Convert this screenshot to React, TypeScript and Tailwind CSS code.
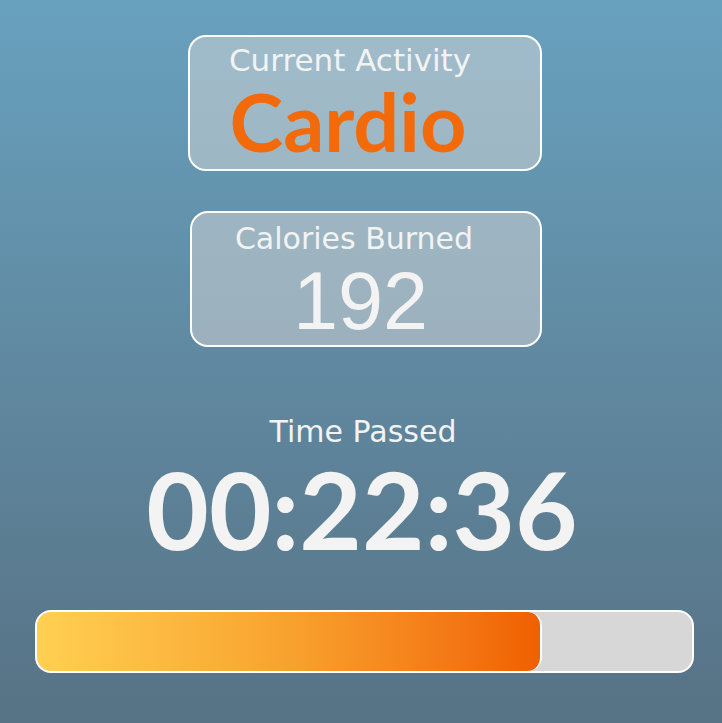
import React from 'react';

const workout = {
  activity: 'Cardio',
  calories: 192,
  elapsed: '00:22:36',
  progress: 0.771,
};

const App = () => {
  return (
    <div className="h-screen w-full overflow-hidden bg-gradient-to-b from-[#68a1be] to-[#577285] font-['DejaVu_Sans',sans-serif] text-[#f3f3f3]">
      <div className="flex flex-col items-center pt-[35px]">
        {/* current activity */}
        <div className="ml-[8px] flex h-[136px] w-[354px] flex-col items-center rounded-[18px] border-2 border-white bg-[#d8d8d8]/50 pt-[8px]">
          <div className="mr-[30px] text-[31px] leading-none">Current Activity</div>
          <div className="mr-[34px] mt-[4px] font-['Lato',sans-serif] text-[81px] font-bold leading-none text-[#f26a0a]">
            {workout.activity}
          </div>
        </div>

        {/* calories */}
        <div className="ml-[10px] mt-[40px] flex h-[136px] w-[352px] flex-col items-center rounded-[18px] border-2 border-white bg-[#d8d8d8]/50 pt-[11px]">
          <div className="mr-[24px] text-[30px] leading-none">Calories Burned</div>
          <div className="mr-[11px] mt-[7px] font-['Liberation_Sans',Arial,sans-serif] text-[81px] leading-none">
            {workout.calories}
          </div>
        </div>

        <div className="ml-[4px] mt-[70px] text-[30px] leading-none">Time Passed</div>
        <div className="ml-[2px] mt-[7px] font-['Lato',sans-serif] text-[108px] font-bold leading-none">
          {workout.elapsed}
        </div>

        {/* progress */}
        <div className="ml-[35px] mt-[48px] flex h-[63px] w-[659px] self-start overflow-hidden rounded-[16px] border-2 border-white bg-[#d7d7d7]">
          <div
            className="h-full rounded-[14px] border-r-2 border-white bg-gradient-to-r from-[#ffd052] via-[#f8a22e] to-[#ef5f00]"
            style={{ width: `${workout.progress * 100}%` }}
          />
        </div>
      </div>
    </div>
  );
};

export default App;
